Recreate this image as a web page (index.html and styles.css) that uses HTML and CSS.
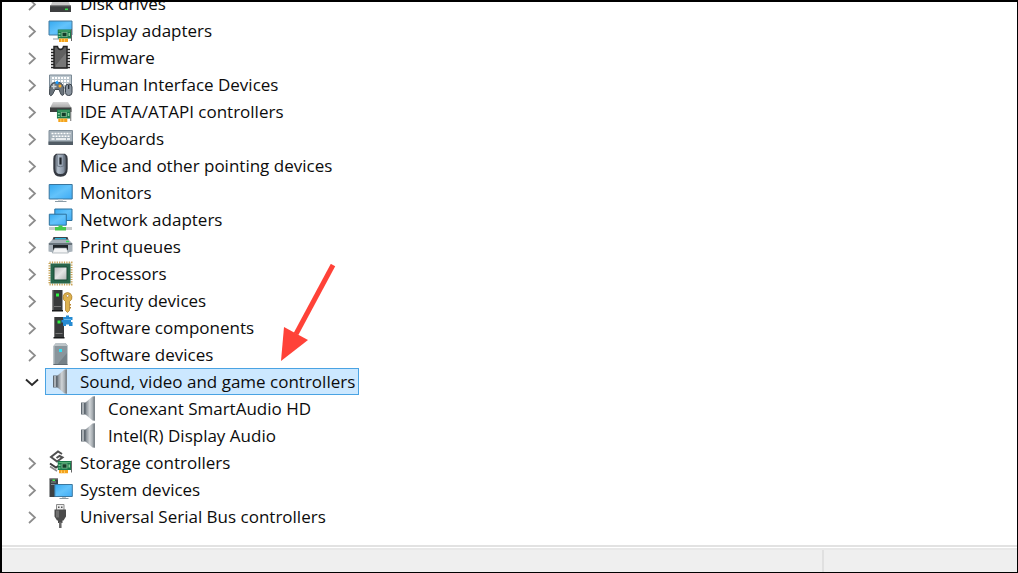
FILE: index.html
```html
<!DOCTYPE html>
<html lang="en">
<head>
<meta charset="utf-8">
<title>Device Manager</title>
<link rel="stylesheet" href="styles.css">
</head>
<body>
<svg class="defs" aria-hidden="true">
  <defs>
    <linearGradient id="blue" x1="0" y1="0" x2="1" y2="1"><stop offset="0" stop-color="#35a9f0"/><stop offset=".5" stop-color="#63c3fb"/><stop offset="1" stop-color="#3eabf5"/></linearGradient>
    <linearGradient id="metal" x1="0" y1="0" x2="1" y2="0"><stop offset="0" stop-color="#7b838b"/><stop offset=".45" stop-color="#d0d4d7"/><stop offset=".75" stop-color="#a5abb0"/><stop offset="1" stop-color="#80878d"/></linearGradient>
    <linearGradient id="mouse" x1="0" y1="0" x2="1" y2="0"><stop offset="0" stop-color="#4d5560"/><stop offset=".25" stop-color="#b4c0cd"/><stop offset=".75" stop-color="#8995a5"/><stop offset="1" stop-color="#4c535d"/></linearGradient>
    <linearGradient id="drive" x1="0" y1="0" x2="0" y2="1"><stop offset="0" stop-color="#d8d8d8"/><stop offset="1" stop-color="#a5a5a5"/></linearGradient>
    <linearGradient id="die" x1="0" y1="0" x2="1" y2="1"><stop offset="0" stop-color="#b5b8b8"/><stop offset=".5" stop-color="#e4e5e5"/><stop offset="1" stop-color="#b0b3b3"/></linearGradient>
    <symbol id="chevron" viewBox="0 0 14 14"><path d="M4 2 10 7.500l-6 5.500" fill="none" stroke="#8c8c8c" stroke-width="1.700"/></symbol>
    <symbol id="chevron-open" viewBox="0 0 14 14"><path d="M1 4.500 7 10l6-5.500" fill="none" stroke="#2b2b2b" stroke-width="1.900"/></symbol>
    <symbol id="card" viewBox="0 0 15 13">
      <path d="M0 .5h13.500v9H0z" fill="#197a4b"/><path d="M1 1.500h12v1H1z" fill="#55ad73"/><path d="M4 3h6v5H4z" fill="#7fbb91"/><path d="M5 3.800h4v3.400H5z" fill="#133e2a"/><path d="M1 4h2v1.500H1zM1 7h2v1H1zM11 4h1.500v3H11z" fill="#8bd09b"/>
      <path d="M13.500 0h1v12h-1z" fill="#666"/><path d="M1.500 9.500h9V13h-9z" fill="#f4a21c"/><path d="M4 10v3M7 10v3" stroke="#ffd673" stroke-width=".8"/>
    </symbol>
    <symbol id="disk" viewBox="0 0 25 25"><path d="m5 9-2.500 6h20L20 9z" fill="#c9c9c9"/><path d="M2 14.500h21V21H2z" fill="#3d3f40"/><path d="M2 14.500h21v.8H2z" fill="#777"/><path d="M17 17.500h3v1.600h-3z" fill="#35e34a"/></symbol>
    <symbol id="display" viewBox="0 0 25 25"><path d="M1 3h23v14H1z" fill="url(#blue)" stroke="#467b9e"/><path d="M5 20.500h6v1H5z" fill="#8d99a1"/><use href="#card" x="9.500" y="11" width="15" height="13"/></symbol>
    <symbol id="firmware" viewBox="0 0 25 25"><path d="M3 4.500h19M3 7.500h19M3 10.500h19M3 13.500h19M3 16.500h19M3 19.500h19M3 22.500h19" stroke="#252525" stroke-width="1.500"/><path d="M6 1.500h3.500q.5 3 3 3t3-3H19V23H6z" fill="#606060" stroke="#242424" stroke-width="1.500"/><path d="m8 20 10-12v14H8z" fill="#777"/></symbol>
    <symbol id="hid" viewBox="0 0 25 25"><path d="M1.500 3h22v13h-22z" fill="#bcc7ce" stroke="#7a8995"/><path d="M4 6h17M4 9h17M4 12h17" stroke="#fff" stroke-width="1.800" stroke-dasharray="2 1"/><path d="M3.500 12q4-3 5.500-.5 2-2.500 5 .5 2.500 3 2 10-1 2.500-3 .5l-2-5H7l-2.500 5q-2 2.500-3 0-.6-7 2-10.500z" fill="#6a737b" stroke="#434b52"/><path d="M5.800 12v5M3.500 14.500h5" stroke="#d0d5d8" stroke-width="1.300"/><circle cx="9" cy="10.500" r="1.600" fill="#1b9cff"/><circle cx="12" cy="14" r="1.500" fill="#ffad26"/><rect x="17.500" y="12" width="6.500" height="11.500" rx="3" fill="#8a949f" stroke="#38414a"/><path d="M20.700 13v4" stroke="#222b33" stroke-width="1.200"/></symbol>
    <symbol id="ide" viewBox="0 0 25 25"><path d="M5 3h15l3.500 6H2z" fill="url(#drive)"/><path d="M2 8.500h21.500v4.500H2z" fill="#3e4040"/><use href="#card" x="8.800" y="10" width="15" height="13"/></symbol>
    <symbol id="keyboard" viewBox="0 0 25 25"><path d="M1 4.500h23.500v14H1z" fill="#a5b1ba" stroke="#82909b"/><path d="M3.500 7.500h19M4.500 10.300h17" stroke="#fff" stroke-width="1.600" stroke-dasharray="2 1"/><path d="M3.500 13h3M8 13h10M19 13h3" stroke="#fff" stroke-width="1.500"/><path d="M.5 15.500h24.500V19H.5z" fill="#515c65"/></symbol>
    <symbol id="pointer" viewBox="0 0 25 25"><path d="M8 .7h9q2.700 1.500 2.700 5v10q0 8-7.200 8t-7.200-8v-10q0-3.500 2.700-5z" fill="#343941"/><path d="M9 1.500h7q2 1.500 2 4v9.500q0 6-5.500 6T7 15V5.500q0-2.500 2-4z" fill="url(#mouse)"/><path d="M9.200 2v11q3.300 1.500 6.600 0V2" fill="none" stroke="#66717f" stroke-width=".8"/><path d="M12.500 4.500v7" stroke="#20252b" stroke-width="2.200"/></symbol>
    <symbol id="monitor" viewBox="0 0 25 25"><path d="M1.200 4.500h23v14.500h-23z" fill="url(#blue)" stroke="#39759e"/><path d="M10 19.500h5v1.500h-5z" fill="#d1d7da"/><path d="M7 21h11.500v1H7z" fill="#8b9ba5"/></symbol>
    <symbol id="network" viewBox="0 0 25 25"><path d="M6.800 2h17.200v11.500H6.800z" fill="url(#blue)" stroke="#2d719d"/><path d="M1.300 7.200h17v11h-17z" fill="url(#blue)" stroke="#2d719d"/><path d="M1 20h23v3H1z" fill="#c7cbca"/><path d="M10.500 18.500h4V20h3.500v3.500H7V20h3.500z" fill="#46c94b"/></symbol>
    <symbol id="printer" viewBox="0 0 25 25"><path d="M5.500 3h14l2 5.500H3.500z" fill="#3d454b"/><path d="M7 4h11v1.500H7z" fill="#2bb4d8"/><path d="m2.500 7.500 2-2h16l2 2 2 2v8q-12 3-24 0v-8z" fill="#a8b2ba"/><path d="M1 9h23v2H1z" fill="#69757d"/><path d="M5 11h15v5H5z" fill="#20262a"/><path d="M6.500 14h12l1.800 5h-16z" fill="#f3f4f5" stroke="#8a949b" stroke-width=".6"/><path d="M18 6.800h3v1.400h-3z" fill="#35e85a"/></symbol>
    <symbol id="cpu" viewBox="0 0 25 25"><path d="M1.500 1.500h22v22h-22z" fill="none" stroke="#c8a255" stroke-width="2" stroke-dasharray="1.200"/><path d="M2.500 2.500h20v20h-20z" fill="#28664b"/><path d="M6 6h13v13H6z" fill="url(#die)" stroke="#174834"/></symbol>
    <symbol id="tower" viewBox="0 0 12 23"><path d="M1 1h10v20H1z" fill="#393b3c"/><path d="M1 1h1v20H1z" fill="#777"/><path d="M4.500 4.500h3v3h-3z" fill="#2ef342"/><path d="M2.500 17.500h7" stroke="#777"/><path d="M.5 21h11v1.500H.5z" fill="#181a1b"/></symbol>
    <symbol id="security" viewBox="0 0 25 25"><use href="#tower" x="3.500" y="1" width="12" height="23"/><path fill-rule="evenodd" d="M19.500 4.500a4.800 4.800 0 0 1 2 9v9l-2 2-2-2v-9a4.800 4.800 0 0 1 2-9zm0 2a1.300 1.300 0 1 0 .1 0z" fill="#deb24f" stroke="#a67825" stroke-width=".7"/><path d="M21.500 16h1.500v1.500h-1.500zM21.500 19h1.500v1.500h-1.500z" fill="#b9842c"/></symbol>
    <symbol id="component" viewBox="0 0 25 25"><use href="#tower" x="5" y="1" width="12" height="23"/><path d="M15 2h3V.5h3V2h3.500v3H23v2h1.500v4H21V9.500h-3V11h-3V7.500h-1.500V5H15z" fill="#268bd2"/><path d="M16 4.500h7" stroke="#64baf0"/></symbol>
    <symbol id="software" viewBox="0 0 25 25"><path d="m8 1-2.500 3v19h14V3.500L17.500 1z" fill="#89959c"/><path d="m8 1-2.500 3h14L17.500 1z" fill="#bdc4c8"/><path d="M6 4v19" stroke="#b7bfc3"/><path d="m9 23 10-12v12z" fill="#758188"/><path d="M11 7h3v3h-3z" fill="#31dff3"/><path d="M5.500 22h14v1h-14z" fill="#606b72"/></symbol>
    <symbol id="speaker" viewBox="0 0 25 25"><path d="M5 6.500h5v12H5z" fill="#5f6870"/><path d="M6 7h2v11H6z" fill="#aab0b5"/><path d="m9.500 6.500 7-6h2.500v24h-2.500l-7-6z" fill="url(#metal)"/><path d="M17.500.5h1.500v24h-1.500z" fill="#7d848a"/></symbol>
    <symbol id="storage" viewBox="0 0 25 25"><path d="m14 4-4-2.500L3 7l6 4.500 5.500-4-3-1.500-3 2" fill="none" stroke="#505050" stroke-width="2"/><path d="m2 13.500 6 4 3-2" fill="none" stroke="#3d3d3d" stroke-width="2"/><path d="m2 16.500 7 4.500" stroke="#8a8a8a" stroke-width="1.500"/><use href="#card" x="9.500" y="10.500" width="15" height="13"/></symbol>
    <symbol id="system" viewBox="0 0 25 25"><path d="M1.500 1.500h8.500v18.500H1.500z" fill="#3c4043"/><path d="M1.500 1.500h8.500v1H1.500z" fill="#777"/><path d="M3 5h5M3 7.500h5" stroke="#838a8e"/><path d="M4.500 2.500h2.500v1.500H4.500z" fill="#3bf04b"/><path d="M6.800 7.500h17.500v12H6.800z" fill="url(#blue)" stroke="#3d779e"/><path d="M14 20h4v1h-4z" fill="#bec7cb"/><path d="M11.500 21h9v1h-9z" fill="#89979f"/></symbol>
    <symbol id="usb" viewBox="0 0 25 25"><path d="M8.500.5h7.500v6H8.500z" fill="#ededed" stroke="#8b8b8b"/><path d="M10 2.500h1.500V4H10zM13 2.500h1.500V4H13z" fill="#555"/><path d="M6.500 5.500H18v7l-2.500 4h-1v2.500H10v-2.500H9l-2.500-4z" fill="#4b4b4b"/><path d="M8 6.500h3v7H8z" fill="#707070"/><path d="M12.300 18v6" stroke="#666" stroke-width="2.500"/></symbol>
  </defs>
</svg>
<div class="window">
  <main class="content">
    <ul class="tree" aria-label="Devices">
      <li class="row"><button class="toggle" aria-label="Expand Disk drives"><svg class="chevron"><use href="#chevron"/></svg></button><span class="item"><svg class="icon"><use href="#disk"/></svg>Disk drives</span></li>
      <li class="row"><button class="toggle" aria-label="Expand Display adapters"><svg class="chevron"><use href="#chevron"/></svg></button><span class="item"><svg class="icon"><use href="#display"/></svg>Display adapters</span></li>
      <li class="row"><button class="toggle" aria-label="Expand Firmware"><svg class="chevron"><use href="#chevron"/></svg></button><span class="item"><svg class="icon"><use href="#firmware"/></svg>Firmware</span></li>
      <li class="row"><button class="toggle" aria-label="Expand Human Interface Devices"><svg class="chevron"><use href="#chevron"/></svg></button><span class="item"><svg class="icon"><use href="#hid"/></svg>Human Interface Devices</span></li>
      <li class="row"><button class="toggle" aria-label="Expand IDE ATA/ATAPI controllers"><svg class="chevron"><use href="#chevron"/></svg></button><span class="item"><svg class="icon"><use href="#ide"/></svg>IDE ATA/ATAPI controllers</span></li>
      <li class="row"><button class="toggle" aria-label="Expand Keyboards"><svg class="chevron"><use href="#chevron"/></svg></button><span class="item"><svg class="icon"><use href="#keyboard"/></svg>Keyboards</span></li>
      <li class="row"><button class="toggle" aria-label="Expand Mice and other pointing devices"><svg class="chevron"><use href="#chevron"/></svg></button><span class="item"><svg class="icon"><use href="#pointer"/></svg>Mice and other pointing devices</span></li>
      <li class="row"><button class="toggle" aria-label="Expand Monitors"><svg class="chevron"><use href="#chevron"/></svg></button><span class="item"><svg class="icon"><use href="#monitor"/></svg>Monitors</span></li>
      <li class="row"><button class="toggle" aria-label="Expand Network adapters"><svg class="chevron"><use href="#chevron"/></svg></button><span class="item"><svg class="icon"><use href="#network"/></svg>Network adapters</span></li>
      <li class="row"><button class="toggle" aria-label="Expand Print queues"><svg class="chevron"><use href="#chevron"/></svg></button><span class="item"><svg class="icon"><use href="#printer"/></svg>Print queues</span></li>
      <li class="row"><button class="toggle" aria-label="Expand Processors"><svg class="chevron"><use href="#chevron"/></svg></button><span class="item"><svg class="icon"><use href="#cpu"/></svg>Processors</span></li>
      <li class="row"><button class="toggle" aria-label="Expand Security devices"><svg class="chevron"><use href="#chevron"/></svg></button><span class="item"><svg class="icon"><use href="#security"/></svg>Security devices</span></li>
      <li class="row"><button class="toggle" aria-label="Expand Software components"><svg class="chevron"><use href="#chevron"/></svg></button><span class="item"><svg class="icon"><use href="#component"/></svg>Software components</span></li>
      <li class="row"><button class="toggle" aria-label="Expand Software devices"><svg class="chevron"><use href="#chevron"/></svg></button><span class="item"><svg class="icon"><use href="#software"/></svg>Software devices</span></li>
      <li class="row"><button class="toggle" aria-label="Collapse Sound, video and game controllers" aria-expanded="true"><svg class="chevron"><use href="#chevron-open"/></svg></button><span class="item selected"><svg class="icon"><use href="#speaker"/></svg>Sound, video and game controllers</span>
        <svg class="arrow" viewBox="0 0 56 98" aria-hidden="true"><path d="M53 1 16 70" stroke="#ff4238" stroke-width="5"/><path d="M4 63 28 76 1 97z" fill="#ff4238"/></svg>
        <ul class="children">
          <li class="row"><span class="item"><svg class="icon"><use href="#speaker"/></svg>Conexant SmartAudio HD</span></li>
          <li class="row"><span class="item"><svg class="icon"><use href="#speaker"/></svg>Intel(R) Display Audio</span></li>
        </ul>
      </li>
      <li class="row"><button class="toggle" aria-label="Expand Storage controllers"><svg class="chevron"><use href="#chevron"/></svg></button><span class="item"><svg class="icon"><use href="#storage"/></svg>Storage controllers</span></li>
      <li class="row"><button class="toggle" aria-label="Expand System devices"><svg class="chevron"><use href="#chevron"/></svg></button><span class="item"><svg class="icon"><use href="#system"/></svg>System devices</span></li>
      <li class="row"><button class="toggle" aria-label="Expand Universal Serial Bus controllers"><svg class="chevron"><use href="#chevron"/></svg></button><span class="item"><svg class="icon"><use href="#usb"/></svg>Universal Serial Bus controllers</span></li>
    </ul>
  </main>
  <footer class="statusbar"><div class="status-main"></div><div class="status-side"></div></footer>
</div>
</body>
</html>
```
FILE: styles.css
```css
* { box-sizing: border-box; }

body {
  margin: 0;
  background: #fff;
  color: #0c0c0c;
  font: 17px/27px "Open Sans", "Noto Sans", sans-serif;
}

ul {
  margin: 0;
  padding: 0;
  list-style: none;
}

.defs {
  position: absolute;
  width: 0;
  height: 0;
}

.window {
  display: flex;
  flex-direction: column;
  min-height: 100vh;
  border: solid #000;
  border-width: 2px 1px 1px 2px;
}

.content {
  flex: 1;
  overflow: hidden;
}

.tree {
  margin-top: -12px;
  padding-left: 20px;
}

.row {
  display: flex;
  flex-wrap: wrap;
  position: relative;
}

.toggle {
  display: flex;
  align-items: center;
  justify-content: center;
  width: 20px;
  height: 27px;
  padding: 0;
  border: 0;
  background: none;
}

.chevron {
  width: 14px;
  height: 14px;
}

.item {
  display: flex;
  align-items: center;
  gap: 7px;
  height: 27px;
  margin-left: 3px;
  padding: 0 3px 0 2px;
  border: 1px solid transparent;
  white-space: nowrap;
}

.selected {
  background: #cce8ff;
  border-color: #4aa3e3;
}

.icon {
  width: 25px;
  height: 25px;
}

.children {
  width: 100%;
  padding-left: 48px;
}

.arrow {
  position: absolute;
  left: 258px;
  top: -104px;
  width: 56px;
  height: 98px;
}

.statusbar {
  display: flex;
  height: 27px;
  padding-top: 3px;
  border-top: 2px solid #e2e2e2;
  background: #efefef;
  box-shadow: inset 0 1px #fff, inset 0 3px #e8e8e8;
}

.status-main {
  flex: 1;
  border-right: 2px solid #e0e0e0;
}

.status-side {
  width: 19%;
}
```
